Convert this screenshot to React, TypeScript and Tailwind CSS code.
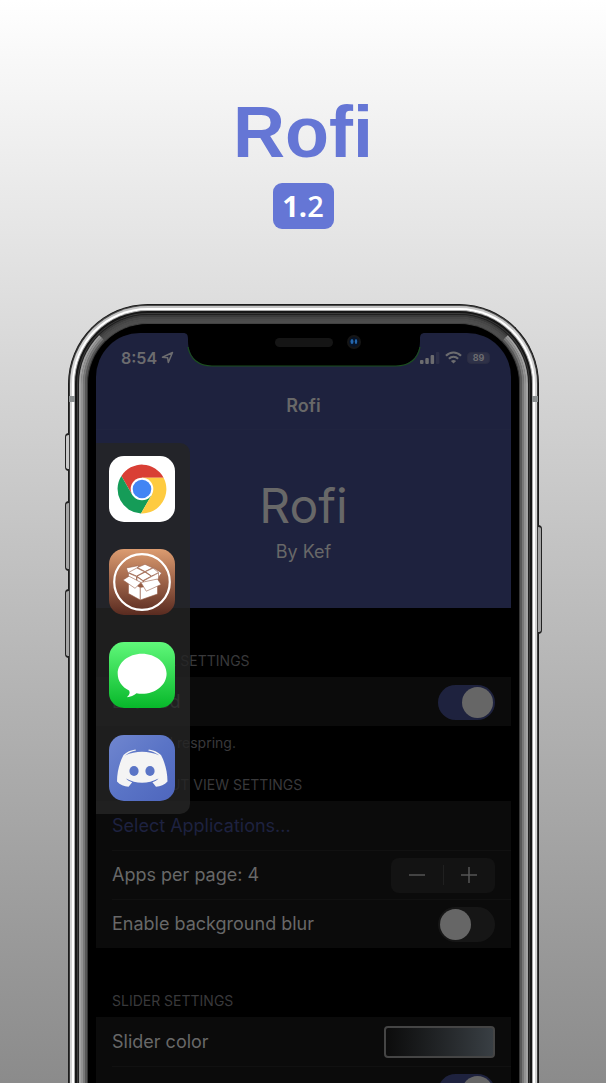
import React from "react";

/* Rings of the phone body, from the outer edge inwards. */
const rings = [
  "rounded-t-[80px] border-x-1 border-t-1 border-[#1c1c1c] bg-[#1c1c1c]",
  "rounded-t-[79px] border-x-1 border-t-1 border-x-[#3c3c3c] border-t-[#4a4a4a] bg-[#777]",
  "rounded-t-[78px] border-x-2 border-t-2 border-x-[#d2d2d2] border-t-[#c4c4c4] bg-[#d2d2d2]",
  "rounded-t-[76px] border-x-2 border-t-2 border-white bg-[#ddd]",
  "rounded-t-[74px] border-x-1 border-t-1 border-[#a9a9a9] bg-[#777]",
  "rounded-t-[73px] border-x-2 border-t-2 border-[#161616] bg-[#161616]",
  "rounded-t-[71px] border-x-1 border-t-1 border-[#3b3b3b] bg-[#2b2b2b]",
  "rounded-t-[70px] border-x-1 border-t-1 border-[#202020] bg-[#333]",
  "rounded-t-[69px] border-x-2 border-t-2 border-x-[#a2a2a2] border-t-[#3a3a3a] bg-[#555]",
  "rounded-t-[67px] border-x-2 border-t-2 border-x-[#929292] border-t-[#454545] bg-[#555]",
  "rounded-t-[65px] border-x-2 border-t-2 border-x-[#787878] border-t-[#4b4b4b] bg-[#555]",
  "rounded-t-[63px] border-x-2 border-t-2 border-x-[#585858] border-t-[#4d4d4d] bg-[#444]",
  "rounded-t-[61px] border-x-1 border-t-1 border-x-[#363636] border-t-[#424242] bg-[#222]",
];

function Body({ children }: { children: React.ReactNode }) {
  return rings.reduceRight<React.ReactNode>(
    (inner, ring) => <div className={ring}>{inner}</div>,
    <div className="rounded-t-[60px] bg-black px-2 pt-[9px]">{children}</div>
  );
}

function SideButtons() {
  return (
    <>
      <span className="absolute -left-[3px] top-[129px] h-[38px] w-1 rounded-l-sm border-y-2 border-l border-[#222] bg-[#c8c8c8]" />
      <span className="absolute -left-[3px] top-[197px] h-[70px] w-1 rounded-l-sm border-y-2 border-l border-[#222] bg-[#a4a4a4]" />
      <span className="absolute -left-[3px] top-[285px] h-[69px] w-1 rounded-l-sm border-y-2 border-l border-[#222] bg-[#a4a4a4]" />
      <span className="absolute -right-[3px] top-[221px] h-[109px] w-1 rounded-r-sm border-y-2 border-r border-[#222] bg-[#a4a4a4]" />
      <span className="absolute left-px top-[92px] h-[6px] w-[6px] bg-[#8b8f90]" />
      <span className="absolute right-px top-[92px] h-[6px] w-[6px] bg-[#8b8f90]" />
    </>
  );
}

function Notch() {
  return (
    <svg className="absolute left-1/2 top-0 -translate-x-1/2" width="242" height="36" viewBox="0 0 242 36" aria-hidden="true">
      <path d="M0 0C4 0 5 2 5 6V8C5 23 15 33 29 33H213C227 33 237 23 237 8V6C237 2 238 0 242 0Z" fill="#000" />
      <path d="M5 14C7 26 16 33 29 33H213C226 33 235 26 237 14" fill="none" stroke="#1b4f1d" strokeWidth="1.2" />
      <rect x="92" y="5" width="58" height="9" rx="4.5" fill="#151515" />
      <circle cx="171" cy="9" r="7" fill="#151515" />
      <circle cx="171" cy="9" r="5" fill="#071326" />
      <ellipse cx="169" cy="8.500" rx="1.500" ry="2.500" fill="#2467ad" />
      <ellipse cx="173" cy="8.500" rx="1.200" ry="2.500" fill="#2467ad" />
    </svg>
  );
}

function StatusBar() {
  return (
    <div className="flex h-[49px] items-center justify-between pl-[25px] pr-[21px] text-[#6c6c6f]">
      <div className="flex items-center gap-1">
        <span className="text-base font-semibold">8:54</span>
        <svg width="13" height="13" viewBox="0 0 13 13" aria-hidden="true">
          <path d="M1.500 6.200L11.500 1.500L7.300 11.500L6.600 6.700Z" fill="none" stroke="currentColor" strokeWidth="1.500" strokeLinejoin="round" />
        </svg>
      </div>
      <div className="flex items-center gap-[5px]">
        <svg width="20" height="12" viewBox="0 0 20 12" aria-hidden="true">
          <rect x="0" y="8" width="3.500" height="4" rx="1" fill="currentColor" />
          <rect x="5.300" y="6" width="3.500" height="6" rx="1" fill="currentColor" />
          <rect x="10.600" y="3" width="3.500" height="9" rx="1" fill="currentColor" />
          <rect x="15.900" y="0" width="3.500" height="12" rx="1" fill="#2c2f48" />
        </svg>
        <svg width="17" height="13" viewBox="0 0 17 13" aria-hidden="true">
          <g fill="none" stroke="currentColor" strokeWidth="2.200">
            <path d="M1 4.700C5.200 .4 11.800 .4 16 4.700" />
            <path d="M3.900 7.700C6.500 5.100 10.500 5.100 13.100 7.700" />
          </g>
          <path d="M8.500 12.600L5.900 9.900C7.400 8.600 9.600 8.600 11.100 9.900Z" fill="currentColor" />
        </svg>
        <span className="flex h-3 w-[23px] items-center justify-center rounded-sm border border-[#2a2d42] bg-[#2e3148] text-[9px] font-bold leading-none">
          89
        </span>
      </div>
    </div>
  );
}

function Toggle({ label, on, id }: { label: string; on: boolean; id: string }) {
  return (
    <div className="relative flex h-12 items-center justify-between px-4">
      <label htmlFor={id}>{label}</label>
      <span className="relative flex">
        <input
          id={id}
          type="checkbox"
          role="switch"
          defaultChecked={on}
          className="peer h-[35px] w-[57px] appearance-none rounded-full bg-[#161616] checked:bg-[#1e223e]"
        />
        <span className="pointer-events-none absolute left-[2px] top-[2px] size-[31px] rounded-full bg-[#666] peer-checked:left-6" />
      </span>
    </div>
  );
}

function GroupTitle({ children, first }: { children: React.ReactNode; first: boolean }) {
  return (
    <h3 className={`flex items-end px-4 pb-2 text-sm leading-4 text-[#39393b] ${first ? "h-[69px]" : "h-[49px]"}`}>
      {children}
    </h3>
  );
}

const group = "bg-[#0b0b0b] text-lg text-[#686868] pt-px";
const divider = "ml-4 border-t border-[#111]";

function Settings() {
  return (
    <>
      <GroupTitle first>GENERAL SETTINGS</GroupTitle>
      <section className={group}>
        <Toggle id="enabled" label="Enabled" on />
      </section>
      <p className="px-4 pt-2 text-sm leading-[18px] text-[#39393b]">Save and respring.</p>

      <GroupTitle first={false}>SHORTCUT VIEW SETTINGS</GroupTitle>
      <section className={group}>
        <a href="#applications" className="flex h-12 items-center px-4 text-[#1e2240]">
          Select Applications...
        </a>
        <div className={divider} />
        <div className="flex h-12 items-center justify-between px-4">
          <span>Apps per page: 4</span>
          <div className="flex h-[35px] w-[104px] items-center rounded-lg bg-[#131313]">
            <button aria-label="Fewer apps" className="flex flex-1 justify-center">
              <svg width="16" height="16" viewBox="0 0 16 16" stroke="#555" strokeWidth="1.500"><path d="M0 8H16" /></svg>
            </button>
            <span className="h-5 w-px bg-[#202020]" />
            <button aria-label="More apps" className="flex flex-1 justify-center">
              <svg width="16" height="16" viewBox="0 0 16 16" stroke="#555" strokeWidth="1.500"><path d="M0 8H16M8 0V16" /></svg>
            </button>
          </div>
        </div>
        <div className={divider} />
        <Toggle id="blur" label="Enable background blur" on={false} />
      </section>

      <GroupTitle first>SLIDER SETTINGS</GroupTitle>
      <section className={group}>
        <div className="flex h-12 items-center justify-between px-4">
          <span>Slider color</span>
          <button aria-label="Choose slider color" className="h-8 w-[111px] rounded border-2 border-[#454545] bg-linear-to-r from-[#0c0c0c] to-[#393f44]" />
        </div>
        <div className={divider} />
        <Toggle id="slider" label="Enable slider" on />
      </section>
    </>
  );
}

function ChromeIcon() {
  return (
    <svg viewBox="0 0 66 66" className="size-full" aria-hidden="true">
      <rect width="66" height="66" fill="#fff" />
      <path d="M12.400 19.900A24.400 24.400 0 0 1 54.600 21.700H33L23.200 38.650Z" fill="#d93f35" />
      <path d="M32 57.400A24.400 24.400 0 0 1 12.400 19.900L23.200 38.650H42.800Z" fill="#159c58" />
      <path d="M54.600 21.700A24.400 24.400 0 0 1 32 57.400L42.800 38.650L33 21.700Z" fill="#fecb40" />
      <circle cx="33" cy="33" r="11.300" fill="#fff" />
      <circle cx="33" cy="33" r="9.300" fill="#4285f4" />
    </svg>
  );
}

function CydiaIcon() {
  return (
    <svg viewBox="0 0 66 66" className="size-full" aria-hidden="true">
      <defs>
        <linearGradient id="cydia" x1="0" y1="0" x2="0" y2="1">
          <stop stopColor="#dc9c70" />
          <stop offset=".5" stopColor="#9c6248" />
          <stop offset="1" stopColor="#592b20" />
        </linearGradient>
      </defs>
      <rect width="66" height="66" fill="url(#cydia)" />
      <circle cx="33" cy="33" r="27.800" fill="none" stroke="#fff" strokeWidth="2.200" />
      <g fill="#fff" stroke="#98604a" strokeWidth=".6" strokeLinejoin="round">
        <path d="M17.300 19L30 16.500L27 21L19.500 25Z" />
        <path d="M44 18.500L52.600 24L49 29L42 25Z" />
        <path d="M28.500 18.500L36 15.300L43.500 18.800L36 22.500Z" />
        <path d="M19.500 23.500L27.800 19L35.500 22.800L27.500 27Z" />
        <path d="M36.500 22.700L44 19.100L49.500 23.500L42.500 27Z" />
        <path d="M28 27.300L36 23.200L42.200 27.200L34 31.600Z" />
        <path d="M19.500 24.200L27.500 27.600V32L19.500 28Z" />
        <path d="M28 28L34 32V35L28 32.500Z" />
        <path d="M34.500 32L42.500 27.600L49.500 24V30L34.500 35Z" />
        <path d="M19.500 32L31.300 38.500V51L19.500 44.500Z" />
        <path d="M31.300 38.500L48.500 35V45L31.300 51Z" />
        <path d="M14 31L20 27.200L32 33.500L26 39.300Z" />
        <path d="M32 33.500L48.500 30L52 35.500L37.300 42.200Z" />
      </g>
    </svg>
  );
}

function MessagesIcon() {
  return (
    <svg viewBox="0 0 66 66" className="size-full" aria-hidden="true">
      <defs>
        <linearGradient id="messages" x1="0" y1="0" x2="0" y2="1">
          <stop stopColor="#60f87a" />
          <stop offset="1" stopColor="#07b82a" />
        </linearGradient>
      </defs>
      <rect width="66" height="66" fill="url(#messages)" />
      <path d="M33 11.700C19.500 11.700 8.700 20.500 8.700 31.700C8.700 38.800 13 45 20 48.500C21.500 50.800 20 53.500 17.800 55.200C21.500 55.200 25 53.300 27.500 51.300C29.300 51.700 31 51.800 33 51.800C46.500 51.800 57.600 43 57.600 31.700C57.600 20.500 46.500 11.700 33 11.700Z" fill="#fff" />
    </svg>
  );
}

function DiscordIcon() {
  return (
    <svg viewBox="0 0 66 66" className="size-full" aria-hidden="true">
      <defs>
        <linearGradient id="discord" x1="0" y1="0" x2="1" y2="1">
          <stop stopColor="#7086cf" />
          <stop offset=".5" stopColor="#5a74c6" />
          <stop offset="1" stopColor="#4e66bd" />
        </linearGradient>
      </defs>
      <rect width="66" height="66" fill="url(#discord)" />
      <g fill="#f4f4f4">
        <path d="M14.500 20C17.500 17 21.800 15 26.500 14.500L27 15.600C22.500 16.500 19.500 18 16 20.500C27 15.500 39 15.500 50.500 20.500C46.500 18 43.500 16.500 39.300 15.600L39.800 14.500C44.500 15 48.800 17 52 20C56 27.500 58.500 37 58.500 46.500C55.500 50 51.500 51.500 47 51.700L43.400 47.300C46 46.500 48 45.300 49.500 43.500C39 49.200 27 49.200 17 43.500C18.500 45.300 20.500 46.500 23.200 47.300L19.600 51.700C15 51.500 11 50 8 46.500C8 37 10.500 27.500 14.500 20Z" />
      </g>
      <ellipse cx="25" cy="36" rx="4.600" ry="5" fill="#5a74c6" />
      <ellipse cx="41" cy="36" rx="4.600" ry="5" fill="#5a74c6" />
    </svg>
  );
}

const apps = [
  { name: "Chrome", Icon: ChromeIcon },
  { name: "Cydia", Icon: CydiaIcon },
  { name: "Messages", Icon: MessagesIcon },
  { name: "Discord", Icon: DiscordIcon },
];

function Drawer() {
  return (
    <nav className="absolute left-0 top-[110px] flex w-[94px] flex-col gap-[27px] rounded-r-[10px] bg-[#252525]/82 py-[13px] pl-[13px]">
      {apps.map(({ name, Icon }) => (
        <button key={name} aria-label={name} className="size-[66px] overflow-hidden rounded-[15px]">
          <Icon />
        </button>
      ))}
    </nav>
  );
}

export default function App() {
  return (
    <main className="flex h-screen flex-col overflow-hidden bg-linear-to-b from-white to-[#8b8b8b] font-['Inter',sans-serif]">
      <header className="flex flex-col items-center pt-24 font-['Liberation_Sans',sans-serif]">
        <h1 className="text-7xl font-bold leading-none text-[#6576d5]">Rofi</h1>
        <p className="mt-[15px] flex h-[46px] w-[61px] items-center justify-center rounded-[9px] bg-[#6576d5] font-['Open_Sans',sans-serif] text-[29px] font-semibold text-white">
          <span className="font-bold">1.</span>2
        </p>
      </header>
      <div className="relative ml-17 mr-[67px] mt-[75px] shrink-0">
        <Body>
          <div className="relative overflow-hidden rounded-t-[44px] bg-black">
            <div className="bg-[#1e223e] text-[#686868]">
              <StatusBar />
              <div className="flex h-12 items-center justify-center border-b border-[#20243f] text-lg font-semibold">Rofi</div>
              <div className="flex h-[178px] flex-col items-center pt-12">
                <h2 className="text-5xl leading-[56px]">Rofi</h2>
                <p className="mt-1 text-lg leading-7">By Kef</p>
              </div>
            </div>
            <Settings />
            <Notch />
            <Drawer />
          </div>
        </Body>
        <SideButtons />
      </div>
    </main>
  );
}
